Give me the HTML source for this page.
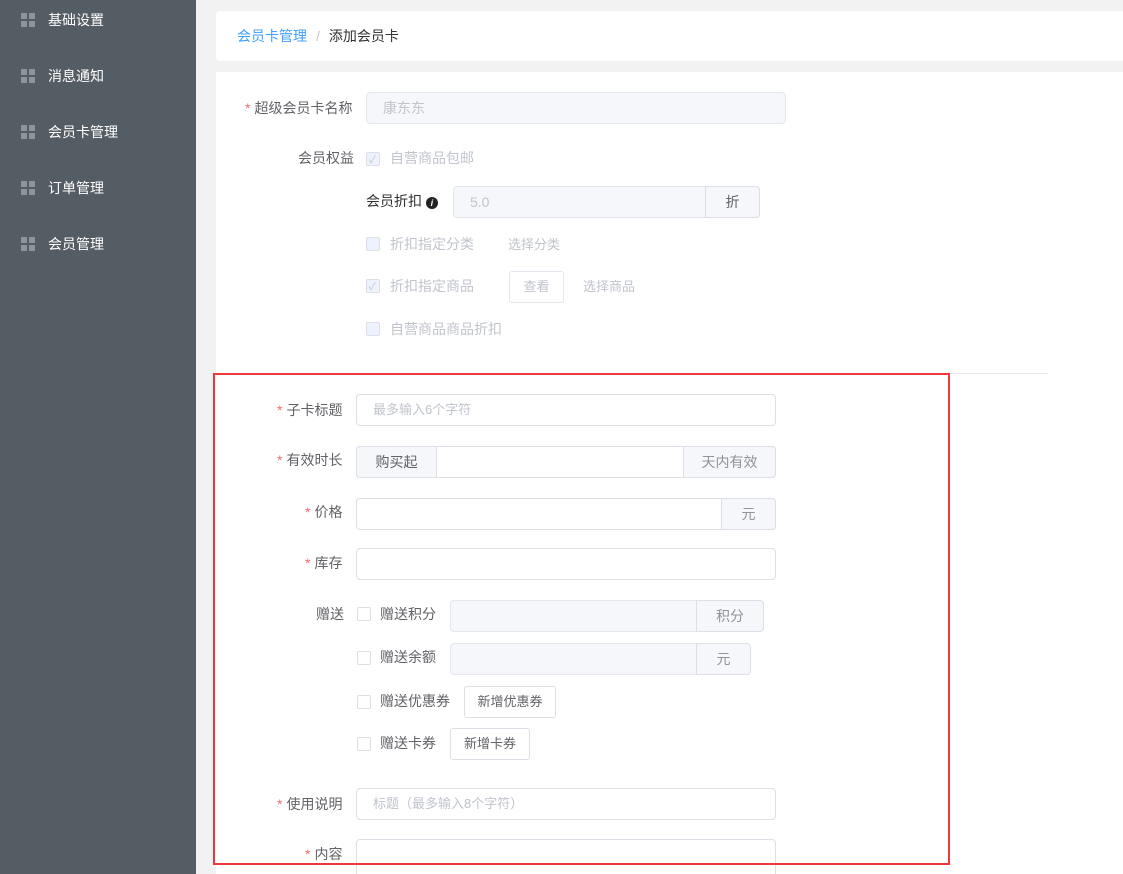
<!DOCTYPE html>
<html style="width:1123px;height:874px;overflow:hidden"><head><meta charset="utf-8"><style>
*{margin:0;padding:0;box-sizing:border-box}
body{width:1123px;height:874px;overflow:hidden;background:#f2f2f2;font-family:"Liberation Sans","Noto Sans CJK SC",sans-serif;font-size:14px;color:#606266;position:relative}
.a{position:absolute}
.side{left:0;top:0;width:196px;height:874px;background:#545c64}
.mi{position:absolute;left:21px;color:#fff;font-size:14px;display:flex;align-items:center}
.ic{width:14px;height:14px;margin-right:13px;display:grid;grid-template-columns:6px 6px;gap:2px}
.ic i{background:#8e949a;display:block;width:6px;height:6px}
.card{background:#fff}
.st{color:#f56c6c;margin-right:4px}
.in{position:absolute;border:1px solid #dcdfe6;border-radius:4px;background:#fff;height:32px;color:#c0c4cc;padding-left:16px;line-height:30px}
.dis{background:#f5f7fa;border-color:#e4e7ed}
.ap{position:absolute;top:-1px;bottom:-1px;right:-1px;border:1px solid #dcdfe6;background:#f5f7fa;border-radius:0 4px 4px 0;color:#909399;text-align:center;line-height:30px}
.cb{position:absolute;width:14px;height:14px;border:1px solid #dcdfe6;border-radius:2px;background:#fff}
.cbd{background:#edf2fc;border-color:#dcdfe6}
.t{position:absolute;white-space:nowrap;line-height:16px}
.g{color:#c0c4cc}
.btn{position:absolute;border:1px solid #dcdfe6;border-radius:3px;background:#fff;height:32px;line-height:30px;text-align:center;color:#606266;font-size:12px}
</style></head><body>
<div class="a side">
<div class="mi" style="top:10px"><span class="ic"><i></i><i></i><i></i><i></i></span>基础设置</div>
<div class="mi" style="top:66px"><span class="ic"><i></i><i></i><i></i><i></i></span>消息通知</div>
<div class="mi" style="top:122px"><span class="ic"><i></i><i></i><i></i><i></i></span>会员卡管理</div>
<div class="mi" style="top:178px"><span class="ic"><i></i><i></i><i></i><i></i></span>订单管理</div>
<div class="mi" style="top:234px"><span class="ic"><i></i><i></i><i></i><i></i></span>会员管理</div>
</div>
<div class="a card" style="left:216px;top:11px;width:907px;height:50px;border-radius:4px 0 0 4px"></div>
<div class="t" style="left:237px;top:28px"><span style="color:#409eff">会员卡管理</span><span style="color:#c0c4cc;margin:0 9px">/</span><span style="color:#303133">添加会员卡</span></div>
<div class="a card" style="left:216px;top:72px;width:907px;height:802px"></div>
<div class="a" style="left:216px;top:373px;width:832px;height:1px;background:#e4e7ed"></div>

<div class="t" style="left:245px;top:100px"><span class="st">*</span>超级会员卡名称</div>
<div class="in dis" style="left:366px;top:92px;width:420px">康东东</div>
<div class="t" style="left:298px;top:150px">会员权益</div>
<div class="cb cbd" style="left:366px;top:152px"><span style="position:absolute;left:2px;top:-2px;font-size:10px;color:#c0c4cc">✓</span></div>
<div class="t g" style="left:390px;top:150px">自营商品包邮</div>
<div class="t" style="left:366px;top:193px;color:#303133">会员折扣 <span style="display:inline-block;width:12px;height:12px;border-radius:50%;background:#222;color:#fff;font-size:9px;text-align:center;line-height:12px;font-style:italic;font-weight:bold">i</span></div>
<div class="in dis" style="left:453px;top:186px;width:307px">5.0<div class="ap" style="width:55px;color:#606266">折</div></div>
<div class="cb cbd" style="left:366px;top:237px"></div><div class="t g" style="left:390px;top:236px">折扣指定分类</div><div class="t g" style="left:508px;top:237px;font-size:13px">选择分类</div>
<div class="cb cbd" style="left:366px;top:279px"><span style="position:absolute;left:2px;top:-2px;font-size:10px;color:#c0c4cc">✓</span></div><div class="t g" style="left:390px;top:278px">折扣指定商品</div>
<div class="btn g" style="left:509px;top:271px;width:55px;border-color:#e4e7ed;color:#c0c4cc;font-size:13px">查看</div><div class="t g" style="left:583px;top:279px;font-size:13px">选择商品</div>
<div class="cb cbd" style="left:366px;top:322px"></div><div class="t g" style="left:390px;top:321px">自营商品商品折扣</div>

<div class="a" style="left:213px;top:373px;width:737px;height:492px;border:2px solid #f0383c;z-index:2"></div>

<div class="t" style="left:277px;top:402px"><span class="st">*</span>子卡标题</div>
<div class="in" style="left:356px;top:394px;width:420px;font-size:13px">最多输入6个字符</div>
<div class="t" style="left:277px;top:452px"><span class="st">*</span>有效时长</div>
<div class="in" style="left:356px;top:446px;width:420px;padding:0">
<div class="ap" style="left:-1px;right:auto;width:81px;border-radius:4px 0 0 4px;color:#606266">购买起</div>
<div class="ap" style="width:93px">天内有效</div></div>
<div class="t" style="left:305px;top:504px"><span class="st">*</span>价格</div>
<div class="in" style="left:356px;top:498px;width:420px"><div class="ap" style="width:55px">元</div></div>
<div class="t" style="left:305px;top:555px"><span class="st">*</span>库存</div>
<div class="in" style="left:356px;top:548px;width:420px"></div>
<div class="t" style="left:316px;top:606px">赠送</div>
<div class="cb" style="left:357px;top:607px"></div><div class="t" style="left:380px;top:606px">赠送积分</div>
<div class="in dis" style="left:450px;top:600px;width:314px"><div class="ap" style="width:68px">积分</div></div>
<div class="cb" style="left:357px;top:651px"></div><div class="t" style="left:380px;top:649px">赠送余额</div>
<div class="in dis" style="left:450px;top:643px;width:301px"><div class="ap" style="width:55px">元</div></div>
<div class="cb" style="left:357px;top:695px"></div><div class="t" style="left:380px;top:693px">赠送优惠券</div>
<div class="btn" style="left:464px;top:686px;width:92px;font-size:13px">新增优惠券</div>
<div class="cb" style="left:357px;top:737px"></div><div class="t" style="left:380px;top:735px">赠送卡券</div>
<div class="btn" style="left:450px;top:728px;width:80px;font-size:13px">新增卡券</div>
<div class="t" style="left:277px;top:796px"><span class="st">*</span>使用说明</div>
<div class="in" style="left:356px;top:788px;width:420px;font-size:13px">标题（最多输入8个字符）</div>
<div class="t" style="left:305px;top:846px"><span class="st">*</span>内容</div>
<div class="in" style="left:356px;top:839px;width:420px;height:35px;border-bottom:none;border-radius:4px 4px 0 0"></div>
</body></html>
